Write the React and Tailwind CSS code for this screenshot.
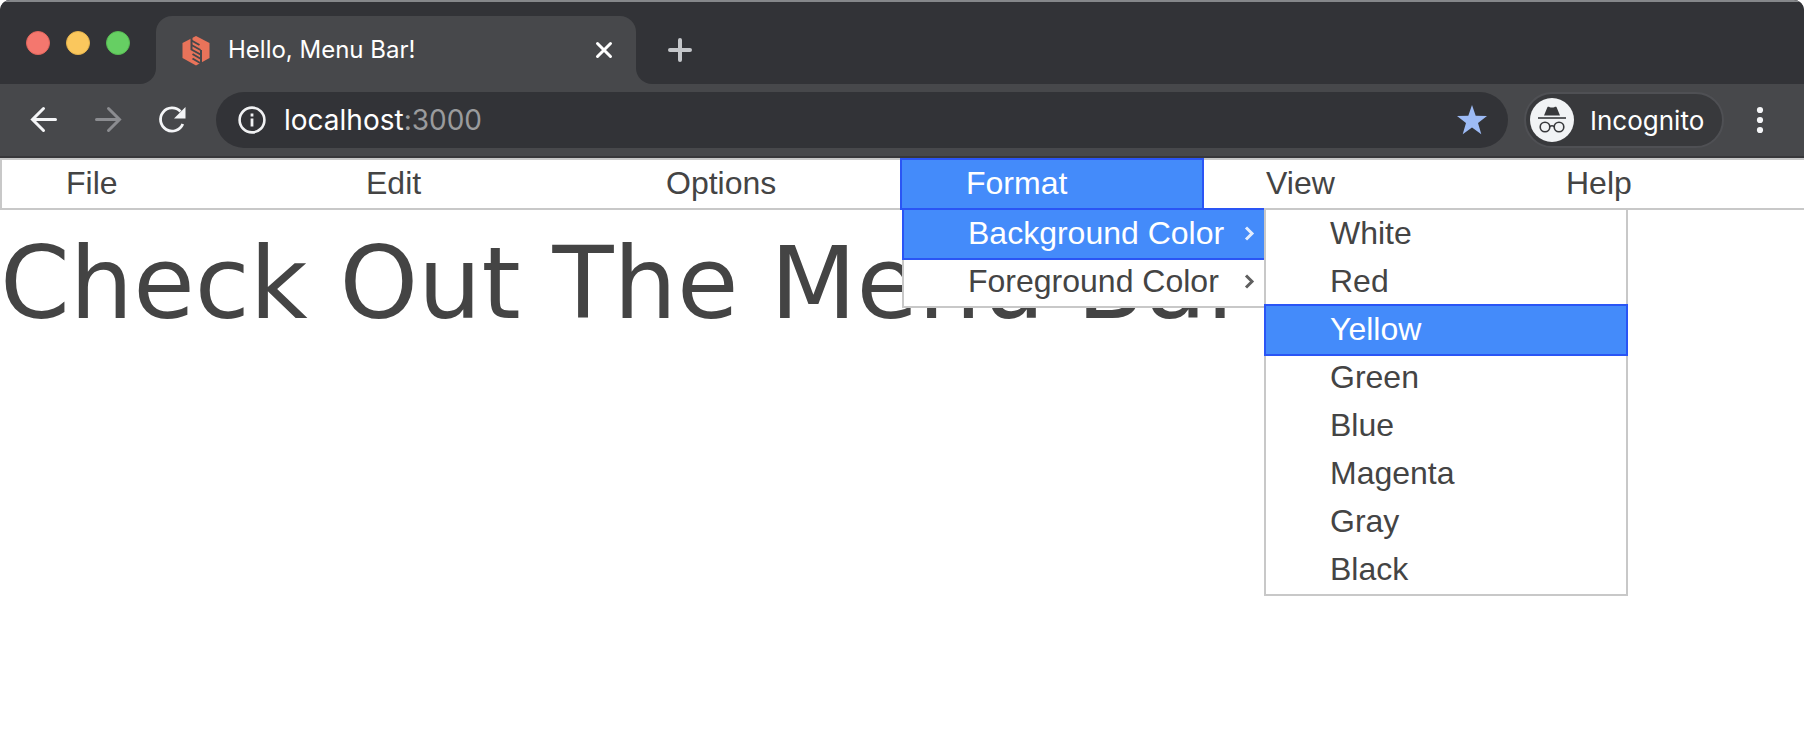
import React from "react";

const MENUS = ["File", "Edit", "Options", "Format", "View", "Help"];
const COLORS = ["White", "Red", "Yellow", "Green", "Blue", "Magenta", "Gray", "Black"];

const ROW = "box-border block w-full h-12 pl-16 pt-[5px] pb-[7px] text-left whitespace-nowrap leading-[36px]";
const ACTIVE = "relative bg-[#448bfa] text-white outline-2 outline-[#2a55f5]";

function Favicon() {
  return (
    <svg className="size-8 shrink-0" viewBox="0 0 32 32" aria-hidden="true">
      <path d="M16 2 29.500 9v15L16 31.500 2.500 24V9z" fill="#e9735a" />
      <g fill="none" stroke="#47484b" strokeWidth="2">
        <path d="M11.500 3v12.500l9 5" />
        <path d="M11.500 6.500l8 4.500M11.500 11l9 5" />
        <path d="M21 16v15" />
        <path d="M12.500 20l8.500 5M12.500 24.500l8.500 5" />
      </g>
    </svg>
  );
}

function Chrome() {
  return (
    <header className="rounded-t-[10px] overflow-hidden bg-[#47484b] border-b-2 border-[#38383b] font-['Inter',sans-serif] text-white">
      <div className="flex h-[84px] bg-[#323337] border-t-2 border-[#85878a]">
        <div className="w-[156px] shrink-0 bg-[#47484b] mt-[14px]">
          <div className="h-full flex items-start gap-4 pl-[26px] pt-[15px] bg-[#323337] rounded-br-[16px]">
            <button aria-label="Close window" className="size-6 rounded-full bg-[#f4776e] border border-[#e2665c]" />
            <button aria-label="Minimize window" className="size-6 rounded-full bg-[#fac75d] border border-[#e5b34c]" />
            <button aria-label="Zoom window" className="size-6 rounded-full bg-[#66cf63] border border-[#57bb52]" />
          </div>
        </div>
        <div className="w-[480px] shrink-0 mt-[14px] pl-6 pr-5 flex items-center bg-[#47484b] rounded-t-[16px]">
          <Favicon />
          <span className="flex-1 ml-4 text-[24px] leading-8">Hello, Menu Bar!</span>
          <button aria-label="Close tab" className="size-6 flex items-center justify-center">
            <svg className="size-6" viewBox="0 0 24 24" fill="none" stroke="#fff" strokeWidth="3" strokeLinecap="round">
              <path d="M5.500 5.500l13 13M18.500 5.500l-13 13" />
            </svg>
          </button>
        </div>
        <div className="flex-1 bg-[#47484b] mt-[14px]">
          <div className="h-full flex items-center pl-8 bg-[#323337] rounded-bl-[16px]">
            <button aria-label="New tab" className="size-6">
              <svg className="size-6" viewBox="0 0 24 24" fill="none" stroke="#c5c7cb" strokeWidth="4" strokeLinecap="round">
                <path d="M12 2v20M2 12h20" />
              </svg>
            </button>
          </div>
        </div>
      </div>
      <div className="flex h-[72px] items-center">
        <button aria-label="Back" className="ml-7 size-8">
          <svg className="size-8" viewBox="0 0 32 32" fill="none" stroke="#f4f5f7" strokeWidth="3" strokeLinecap="round">
            <path d="M27.500 15.500H5M15.500 4.500l-11 11 11 11" />
          </svg>
        </button>
        <button aria-label="Forward" className="ml-8 size-8">
          <svg className="size-8" viewBox="0 0 32 32" fill="none" stroke="#8b8c90" strokeWidth="3" strokeLinecap="round">
            <path d="M4.500 15.500H27M16.500 4.500l11 11-11 11" />
          </svg>
        </button>
        <button aria-label="Reload" className="ml-8 size-8">
          <svg className="size-8" viewBox="0 0 32 32" fill="none">
            <path d="M24.500 7.500A11.600 11.600 0 1 0 26.800 20" stroke="#f4f5f7" strokeWidth="2.800" />
            <path d="M29.500 3v11.500H18z" fill="#f4f5f7" />
          </svg>
        </button>
        <div className="ml-7 flex-1 h-14 flex items-center pl-[22px] pr-5 rounded-full bg-[#323337]">
          <svg className="size-7 shrink-0" viewBox="0 0 28 28" fill="none" aria-hidden="true">
            <circle cx="14" cy="14" r="12.400" stroke="#f0f1f3" strokeWidth="2.600" />
            <path d="M14 12.500v8M14 7.500v3" stroke="#f0f1f3" strokeWidth="2.800" />
          </svg>
          <p className="flex-1 ml-[18px] text-[28px] leading-9 text-[#9a9b9d]">
            <span className="text-white">localhost</span>:3000
          </p>
          <button aria-label="Bookmark this page" className="size-8">
            <svg className="size-8" viewBox="0 0 32 32" fill="#9dbbf5">
              <path d="M16 1l3.700 10.800L31 12l-9 7 3.300 11.200L16 23.500 6.700 30.200 10 19l-9-7 11.300-.2z" />
            </svg>
          </button>
        </div>
        <button className="ml-4 h-14 w-[200px] flex items-center pl-1 rounded-full bg-[#38393c] border-2 border-[#4f5054] text-[26px]">
          <svg className="size-11 shrink-0" viewBox="0 0 44 44" aria-hidden="true">
            <circle cx="22" cy="22" r="22" fill="#f1f3f5" />
            <path d="M17.500 9c1.500-.6 2 .6 4.500.6s3-1.200 4.500-.6l3.500 8.500H14z" fill="#38393c" />
            <path d="M8 20h28" stroke="#38393c" strokeWidth="1.600" />
            <g fill="none" stroke="#38393c" strokeWidth="1.600">
              <circle cx="15" cy="29" r="4.800" />
              <circle cx="29" cy="29" r="4.800" />
              <path d="M19.800 28.500q2.200-1.500 4.400 0" />
            </g>
          </svg>
          <span className="ml-4">Incognito</span>
        </button>
        <button aria-label="More" className="ml-5 mr-7 size-8">
          <svg className="size-8" viewBox="0 0 32 32" fill="#f4f5f7">
            <circle cx="16" cy="6" r="3.100" />
            <circle cx="16" cy="16" r="3.100" />
            <circle cx="16" cy="26" r="3.100" />
          </svg>
        </button>
      </div>
    </header>
  );
}

function Chevron() {
  return (
    <svg className="w-3 h-4 shrink-0 opacity-85" viewBox="0 0 12 16" fill="none" stroke="currentColor" strokeWidth="3" aria-hidden="true">
      <path d="M2 2.500l6 6-6 6" />
    </svg>
  );
}

function ColorMenu() {
  return (
    <ul className="absolute -top-0.5 left-[360px] w-[364px] bg-white border-2 border-[#c8c8c8] text-[#444]">
      {COLORS.map((name) => (
        <li key={name}>
          <button className={`${ROW} ${name === "Yellow" ? ACTIVE : ""}`}>{name}</button>
        </li>
      ))}
    </ul>
  );
}

function FormatMenu() {
  return (
    <ul className="absolute top-full left-0 z-10 w-[364px] bg-white border-2 border-[#c8c8c8] text-[#444]">
      <li className="relative">
        <button className={`${ROW} ${ACTIVE} flex items-center justify-between pr-2`}>
          Background Color
          <Chevron />
        </button>
        <ColorMenu />
      </li>
      <li>
        <button className={`${ROW} flex items-center justify-between pr-2`}>
          Foreground Color
          <Chevron />
        </button>
      </li>
    </ul>
  );
}

export default function App() {
  return (
    <div className="min-h-screen bg-white text-[#444]">
      <Chrome />
      <nav className="border-2 border-r-0 border-[#c8c8c8] bg-white font-['Liberation_Sans',Arial,sans-serif] text-[32px]">
        <ul className="flex">
          {MENUS.map((name) => (
            <li key={name} className="relative w-[300px]">
              <button className={`${ROW} ${name === "Format" ? ACTIVE : ""}`}>{name}</button>
              {name === "Format" && <FormatMenu />}
            </li>
          ))}
        </ul>
      </nav>
      <h1 className="mt-[14px] font-['Verdana','DejaVu_Sans',sans-serif] text-[100px] leading-[120px] whitespace-nowrap">
        Check Out The Menu Bar
      </h1>
    </div>
  );
}
